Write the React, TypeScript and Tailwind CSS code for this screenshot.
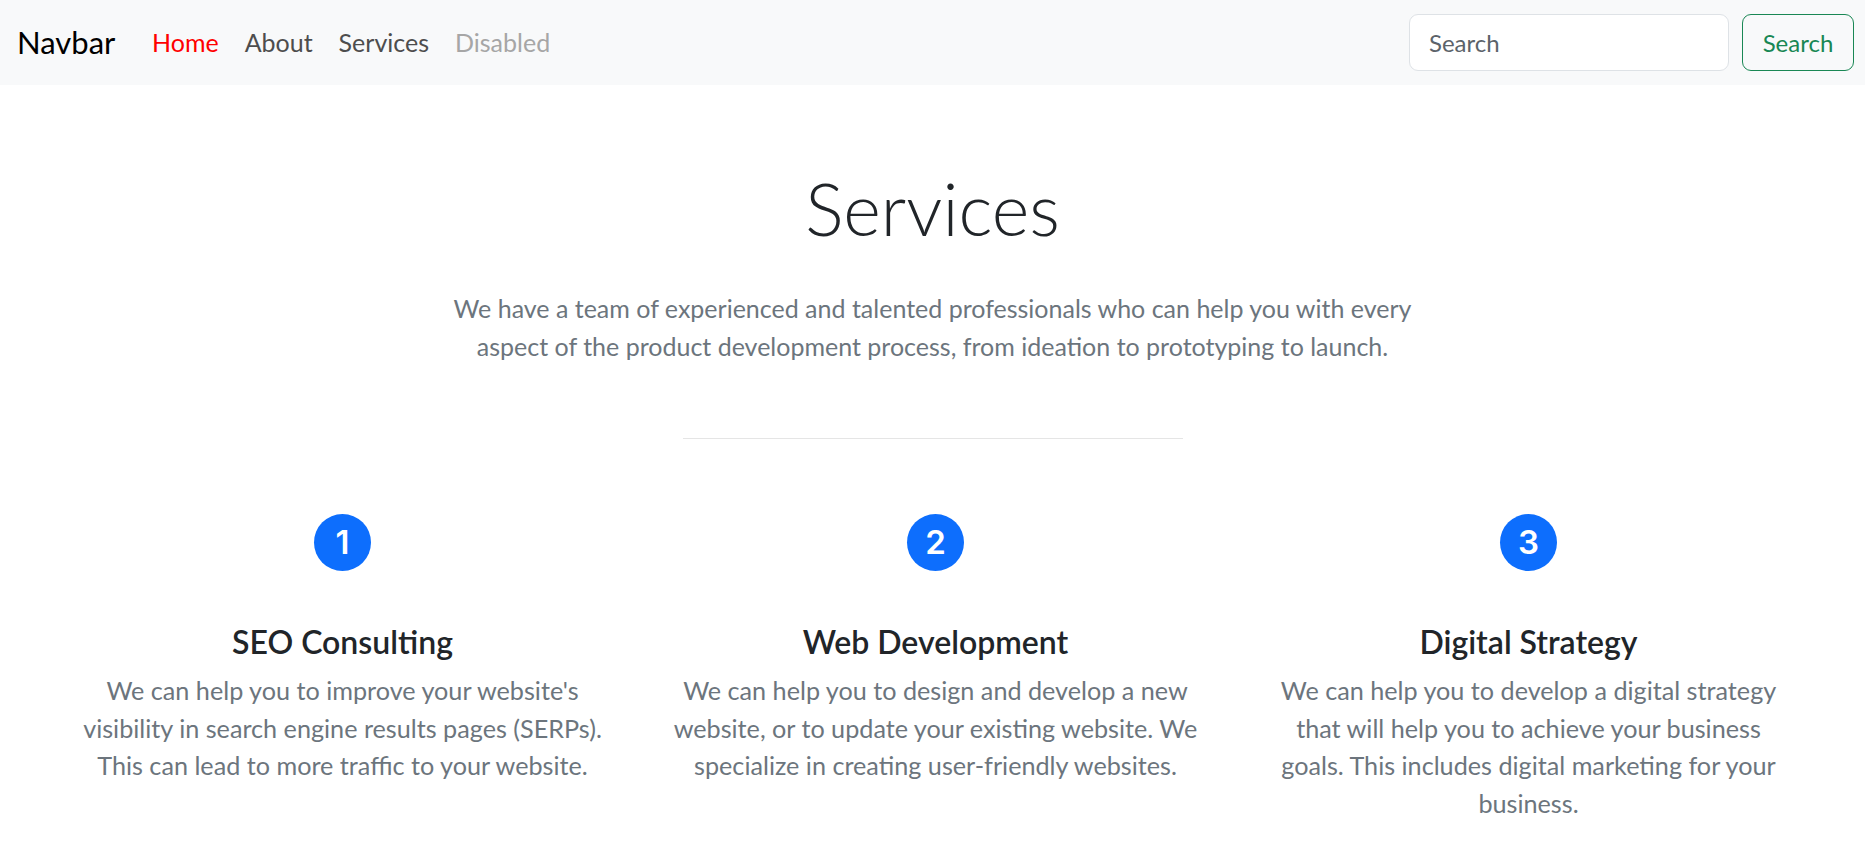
type Service = {
  num: string;
  title: string;
  lines: string[];
};

const services: Service[] = [
  {
    num: "1",
    title: "SEO Consulting",
    lines: [
      "We can help you to improve your website's",
      "visibility in search engine results pages (SERPs).",
      "This can lead to more traffic to your website.",
    ],
  },
  {
    num: "2",
    title: "Web Development",
    lines: [
      "We can help you to design and develop a new",
      "website, or to update your existing website. We",
      "specialize in creating user-friendly websites.",
    ],
  },
  {
    num: "3",
    title: "Digital Strategy",
    lines: [
      "We can help you to develop a digital strategy",
      "that will help you to achieve your business",
      "goals. This includes digital marketing for your",
      "business.",
    ],
  },
];

const links = [
  { label: "Home", cls: "text-[#ff0000]" },
  { label: "About", cls: "text-[#4d4d4d]" },
  { label: "Services", cls: "text-[#4d4d4d]" },
  { label: "Disabled", cls: "text-[#a6a6a6]" },
];

function App() {
  return (
    <div className="min-h-screen bg-white font-['Lato',sans-serif] text-[#212529]">
      <nav className="flex h-[85px] items-center bg-[#f8f9fa] pl-[17px] pr-[11px]">
        <span className="w-[122px] text-[31px] leading-none text-black">Navbar</span>
        <ul className="flex">
          {links.map((l) => (
            <li key={l.label} className={`px-[13px] text-[25px] leading-none ${l.cls}`}>
              {l.label}
            </li>
          ))}
        </ul>
        <form className="ml-auto flex gap-[13px]">
          <input
            placeholder="Search"
            className="h-[57px] w-[320px] rounded-[9px] border border-[#dee2e6] bg-white px-[19px] text-[24px] text-[#212529] outline-none placeholder:text-[#5c636a]"
          />
          <button
            type="button"
            className="h-[57px] w-[112px] rounded-[9px] border border-[#198754] text-[24px] text-[#198754]"
          >
            Search
          </button>
        </form>
      </nav>

      <main className="flex flex-col items-center">
        <h1 className="mt-[75px] text-[72px] font-light leading-[96px] text-[#212529]">
          Services
        </h1>
        <p className="mt-[34px] text-center text-[25px] leading-[37.5px] text-[#6c757d]">
          We have a team of experienced and talented professionals who can help you with every
          <br />
          aspect of the product development process, from ideation to prototyping to launch.
        </p>
        <hr className="mt-[73px] w-[500px] border-t border-[#e5e5e5]" />

        <div className="mt-[75px] grid w-[1779px] translate-x-[3px] grid-cols-3">
          {services.map((s) => (
            <div key={s.num} className="flex flex-col items-center">
              <div className="flex h-[57px] w-[57px] items-center justify-center rounded-full bg-[#0d6efd] font-['Inter',sans-serif] text-[33px] font-semibold leading-none text-white">
                {s.num}
              </div>
              <h5 className="mt-[52px] text-[32px] font-semibold leading-[38px] text-[#212529]">
                {s.title}
              </h5>
              <p className="mt-[11px] text-center text-[25.2px] leading-[37.5px] text-[#6c757d]">
                {s.lines.map((line, i) => (
                  <span key={i} className="block">
                    {line}
                  </span>
                ))}
              </p>
            </div>
          ))}
        </div>
      </main>
    </div>
  );
}

export default App;
